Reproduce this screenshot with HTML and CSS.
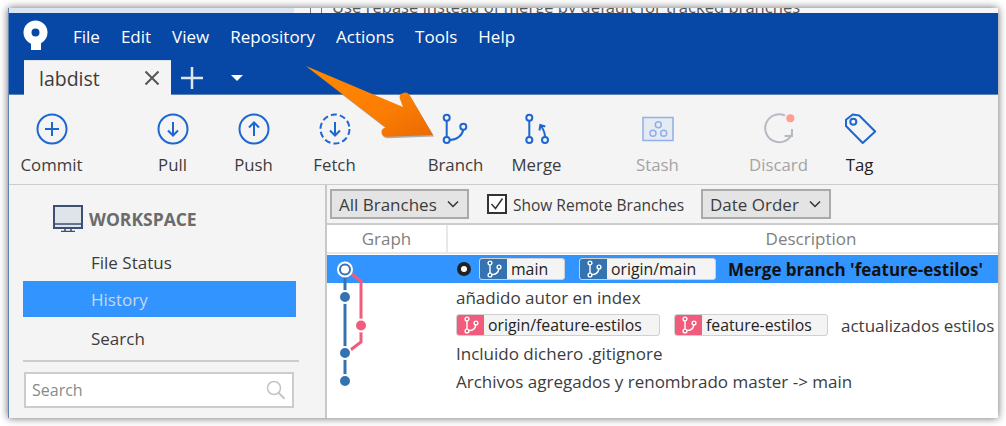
FILE: index.html
```html
<!DOCTYPE html>
<html lang="es">
<head>
    <meta charset="UTF-8">
    <meta name="viewport" content="width=device-width, initial-scale=1.0">
    <title>Sourcetree - labdist</title>
    <link rel="stylesheet" href="styles.css">
</head>
<body>
    <svg class="defs" width="0" height="0">
        <symbol id="chip-branch" viewBox="0 0 16 18">
            <g fill="none" stroke="#fff" stroke-width="1.4">
                <circle cx="4" cy="3" r="1.9"/>
                <circle cx="4" cy="15" r="1.9"/>
                <circle cx="13" cy="7" r="1.9"/>
                <path d="M4 5v8M5.800 14.600c4 0 6.600-2.400 7-5.700"/>
            </g>
        </symbol>
    </svg>

    <div class="window">
        <div class="behind">
            <span class="behind-box"></span>
            <span class="behind-text">Use rebase instead of merge by default for tracked branches</span>
        </div>

        <header class="topbar">
            <div class="menu-row">
                <svg class="logo" width="26" height="38" viewBox="0 0 26 38">
                    <circle cx="12.500" cy="12.500" r="8" fill="none" stroke="#fff" stroke-width="8"/>
                    <path d="M8 18h10v12H8z" fill="#fff"/>
                </svg>
                <nav class="menu">
                    <span>File</span>
                    <span>Edit</span>
                    <span>View</span>
                    <span>Repository</span>
                    <span>Actions</span>
                    <span>Tools</span>
                    <span>Help</span>
                </nav>
            </div>
            <div class="tab-row">
                <div class="tab">
                    <span>labdist</span>
                    <svg width="16" height="16" viewBox="0 0 16 16"><path d="M1.500 1.500l13 13M14.500 1.500l-13 13" stroke="#555" stroke-width="2" fill="none"/></svg>
                </div>
                <svg class="tab-plus" width="22" height="22" viewBox="0 0 22 22"><path d="M11 0v22M0 11h22" stroke="#dfe6f2" stroke-width="2.500"/></svg>
                <span class="tab-caret"></span>
            </div>
        </header>

        <div class="toolbar">
            <div class="tool">
                <svg width="34" height="34" viewBox="0 0 34 34"><circle cx="17" cy="17" r="14.500" class="ic"/><path d="M17 10v14M10 17h14" class="ic"/></svg>
                <span>Commit</span>
            </div>
            <div class="tool group-start">
                <svg width="34" height="34" viewBox="0 0 34 34"><circle cx="17" cy="17" r="14.500" class="ic"/><path d="M17 10v13M12 18.500l5 5 5-5" class="ic"/></svg>
                <span>Pull</span>
            </div>
            <div class="tool">
                <svg width="34" height="34" viewBox="0 0 34 34"><circle cx="17" cy="17" r="14.500" class="ic"/><path d="M17 24V11M12 15.500l5-5 5 5" class="ic"/></svg>
                <span>Push</span>
            </div>
            <div class="tool">
                <svg width="34" height="34" viewBox="0 0 34 34"><circle cx="17" cy="17" r="14.500" class="ic" stroke-dasharray="6 3.100"/><path d="M17 10v13M12 18.500l5 5 5-5" class="ic"/></svg>
                <span>Fetch</span>
            </div>
            <div class="tool group-start">
                <svg width="34" height="34" viewBox="0 0 34 34"><circle cx="7.700" cy="5.700" r="3" class="ic"/><circle cx="7.700" cy="28" r="3" class="ic"/><circle cx="24.300" cy="14.700" r="3" class="ic"/><path d="M7.700 8.700V25M10.700 28c7 0 12.500-4.500 13.600-10.300" class="ic"/></svg>
                <span>Branch</span>
            </div>
            <div class="tool">
                <svg width="34" height="34" viewBox="0 0 34 34"><circle cx="9.300" cy="5.700" r="3" class="ic"/><circle cx="9.300" cy="28" r="3" class="ic"/><circle cx="25" cy="28" r="3" class="ic"/><path d="M9.300 8.700V25M25 25c0-4-1.800-8-4.300-11.500M19.500 18.500l.8-5.500 5 1.500" class="ic"/></svg>
                <span>Merge</span>
            </div>
            <div class="tool group-start tool-off">
                <svg width="34" height="34" viewBox="0 0 34 34"><path d="M2 5.500h30v23H2z" fill="#e6ebf3" stroke="#8fb0e8" stroke-width="1.500"/><g fill="none" stroke="#8fb0e8" stroke-width="1.500"><circle cx="17.300" cy="12.800" r="3"/><circle cx="12" cy="21.200" r="3"/><circle cx="22.700" cy="21.200" r="3"/></g></svg>
                <span>Stash</span>
            </div>
            <div class="tool group-start tool-off">
                <svg width="34" height="34" viewBox="0 0 34 34"><path d="M23 3.500A14 14 0 1 0 29.500 23" fill="none" stroke="#b4b9c4" stroke-width="2"/><path d="M22.500 24h7.500v-7" fill="none" stroke="#b4b9c4" stroke-width="2"/><circle cx="28.300" cy="6.300" r="4" fill="#ff9e8e"/></svg>
                <span>Discard</span>
            </div>
            <div class="tool tool-dark">
                <svg width="34" height="34" viewBox="0 0 34 34"><path d="M3 7.700L9.700 2.500l6.500 1 16 16L19.700 31 3 14z" class="ic" stroke-linejoin="round"/><circle cx="10.300" cy="9.700" r="3" class="ic"/></svg>
                <span>Tag</span>
            </div>
        </div>

        <div class="content">
            <aside class="sidebar">
                <div class="workspace">
                    <svg width="30" height="27" viewBox="0 0 30 27"><path d="M1 1h28v22H1z" fill="#dfe3ea" stroke="#3d4f73" stroke-width="2"/><path d="M1 19h28" stroke="#3d4f73" stroke-width="1.500"/><path d="M12 23v3M18 23v3M8 26.500h14" stroke="#3d4f73" stroke-width="1.500"/></svg>
                    <span>WORKSPACE</span>
                </div>
                <ul class="nav">
                    <li>File Status</li>
                    <li class="nav-active">History</li>
                    <li>Search</li>
                </ul>
                <div class="side-search">
                    <span>Search</span>
                    <svg width="20" height="20" viewBox="0 0 20 20"><circle cx="8" cy="8" r="6.500" fill="none" stroke="#c4c4c4" stroke-width="1.500"/><path d="M12.500 12.800l6 6" stroke="#c4c4c4" stroke-width="2"/></svg>
                </div>
            </aside>

            <main class="main">
                <div class="filters">
                    <div class="dropdown dropdown-branches">
                        <span>All Branches</span>
                        <svg width="12" height="8" viewBox="0 0 12 8"><path d="M1 1.500l5 5 5-5" fill="none" stroke="#333" stroke-width="1.500"/></svg>
                    </div>
                    <label class="check">
                        <svg width="20" height="20" viewBox="0 0 20 20"><path d="M1 1h18v18H1z" fill="#fff" stroke="#333" stroke-width="2"/><path d="M4.500 10l4 4.500 7-10" fill="none" stroke="#333" stroke-width="1.500"/></svg>
                        <span>Show Remote Branches</span>
                    </label>
                    <div class="dropdown dropdown-order">
                        <span>Date Order</span>
                        <svg width="12" height="8" viewBox="0 0 12 8"><path d="M1 1.500l5 5 5-5" fill="none" stroke="#333" stroke-width="1.500"/></svg>
                    </div>
                </div>

                <div class="log-head">
                    <div class="head-graph">Graph</div>
                    <div class="head-desc">Description</div>
                </div>

                <div class="log">
                    <svg class="graph" width="60" height="140" viewBox="0 0 60 140">
                        <g fill="none">
                            <path d="M24.700 19l9.300 7v61l-10.500 8" stroke="#f15c7d" stroke-width="3"/>
                            <path d="M18 14v112" stroke="#3572b0" stroke-width="3"/>
                        </g>
                        <g fill="#3572b0" stroke="#fff" stroke-width="2">
                            <circle cx="18" cy="42" r="6"/>
                            <circle cx="18" cy="98" r="6"/>
                            <circle cx="18" cy="126" r="6"/>
                        </g>
                        <circle cx="34" cy="70.500" r="6" fill="#f15c7d" stroke="#fff" stroke-width="2"/>
                        <circle cx="18" cy="14.500" r="7" fill="#3572b0" stroke="#fff" stroke-width="2"/>
                        <circle cx="18" cy="14.500" r="4" fill="#fff"/>
                    </svg>
                    <div class="row row-selected">
                        <span class="head-dot"></span>
                        <span class="chip chip-main"><i class="chip-icon"><svg width="16" height="18"><use href="#chip-branch"/></svg></i><b>main</b></span>
                        <span class="chip chip-origin"><i class="chip-icon"><svg width="16" height="18"><use href="#chip-branch"/></svg></i><b>origin/main</b></span>
                        <strong class="subject">Merge branch 'feature-estilos'</strong>
                    </div>
                    <div class="row">añadido autor en index</div>
                    <div class="row">
                        <span class="chip chip-red chip-ofe"><i class="chip-icon"><svg width="16" height="18"><use href="#chip-branch"/></svg></i><b>origin/feature-estilos</b></span>
                        <span class="chip chip-red chip-fe"><i class="chip-icon"><svg width="16" height="18"><use href="#chip-branch"/></svg></i><b>feature-estilos</b></span>
                        <span class="row-after">actualizados estilos</span>
                    </div>
                    <div class="row">Incluido dichero .gitignore</div>
                    <div class="row">Archivos agregados y renombrado master -&gt; main</div>
                </div>
            </main>
        </div>

        <!-- flecha puesta encima de la captura -->
        <svg class="arrow" width="150" height="90" viewBox="0 0 150 90">
            <defs>
                <linearGradient id="arrow-fill" x1="0" y1="0" x2="1" y2="1">
                    <stop offset="0" stop-color="#ff8a00"/>
                    <stop offset=".65" stop-color="#fb7c02"/>
                    <stop offset="1" stop-color="#e86a05"/>
                </linearGradient>
            </defs>
            <path d="M4 1L101 42L98 34Q96.500 29.500 100 28.500L103 27.500Q106 27 107.500 30L131 70L85 71.800Q79.500 71.800 79.500 67Q79.500 63 84 62.800Z" fill="#666" opacity=".5" transform="translate(1 1.500)"/>
            <path d="M4 1L101 42L98 34Q96.500 29.500 100 28.500L103 27.500Q106 27 107.500 30L131 70L85 71.800Q79.500 71.800 79.500 67Q79.500 63 84 62.800Z" fill="url(#arrow-fill)"/>
        </svg>
    </div>
</body>
</html>
```

FILE: styles.css
```css
* {
    box-sizing: border-box;
}
html, body {
    margin: 0;
    padding: 0;
    height: 100%;
    overflow: hidden;
}
body {
    position: relative;
    background-color: #fff;
    font-family: "Open Sans", "Noto Sans", sans-serif;
    font-size: 17px;
    color: #3c3c3c;
}
.defs {
    position: absolute;
}

.window {
    position: relative;
    margin: 8px 0 0 8px;
    width: 990px;
    height: 410px;
    padding-top: 5px;
    background: #dbe5f1;
    border-left: 1px solid #5f83b6;
    box-shadow: 0 0 8px rgba(0, 0, 0, .6);
}

/* lo que asoma detras de la ventana */
.behind {
    position: absolute;
    top: 0;
    left: 285px;
    right: 0;
    height: 5px;
    display: flex;
    align-items: flex-start;
    gap: 10px;
    padding-left: 16px;
    overflow: hidden;
    background: #f4f6f9;
    font-size: 16.600px;
    line-height: 20px;
    color: #555;
}
.behind-text {
    margin-top: -11px;
}
.behind-box {
    display: block;
    width: 12px;
    height: 16px;
    margin-top: -8px;
    border: 1px solid #777;
    flex-shrink: 0;
}

.topbar {
    background: #0747a6;
    height: 82px;
    border-bottom: 1px solid #5f83b6;
}
.menu-row {
    display: flex;
    align-items: center;
    height: 47px;
    padding-left: 14px;
}
.logo {
    margin-top: 4px;
}
.menu {
    display: flex;
    gap: 21px;
    margin-left: 24px;
    color: #fff;
    font-size: 17px;
}
.tab-row {
    display: flex;
    align-items: center;
    height: 35px;
    padding-left: 15px;
}
.tab {
    display: flex;
    align-items: center;
    justify-content: space-between;
    width: 147px;
    height: 35px;
    padding: 0 11px 0 15px;
    background: #f4f4f4;
    border-top: 1px solid #dde3ea;
    font-size: 19.500px;
}
.tab-plus {
    margin-left: 10px;
}
.tab-caret {
    margin-left: 28px;
    border-top: 6px solid #fff;
    border-left: 6px solid transparent;
    border-right: 6px solid transparent;
}

.toolbar {
    display: flex;
    height: 90px;
    padding-left: 2px;
    background: #f4f4f4;
    border-bottom: 1px solid #ccc;
    font-size: 16.800px;
}
.tool {
    display: flex;
    flex-direction: column;
    align-items: center;
    width: 81px;
    padding-top: 17px;
    flex-shrink: 0;
}
.tool span {
    margin-top: 7px;
    line-height: 24px;
}
.group-start {
    margin-left: 40px;
}
.tool-off {
    color: #a4a4a4;
}
.tool-dark {
    color: #222;
}
.ic {
    fill: none;
    stroke: #1e66d0;
    stroke-width: 2;
}

.content {
    display: flex;
    height: 233px;
}
.sidebar {
    width: 318px;
    flex-shrink: 0;
    padding: 0 26px 0 14px;
    background: #f4f4f4;
    border-right: 2px solid #c8c8c8;
}
.workspace {
    display: flex;
    align-items: center;
    gap: 6px;
    height: 59px;
    padding: 8px 0 0 30px;
    font-size: 17.500px;
    font-weight: 700;
    color: #6b6b6b;
}
.nav {
    list-style: none;
    margin: 0;
    padding: 0 0 2px;
    border-bottom: 2px solid #ccc;
}
.nav li {
    height: 38px;
    line-height: 38px;
    padding-left: 68px;
}
.nav .nav-active {
    height: 36px;
    line-height: 38px;
    margin: -1px 3px 3px 0;
    background: #3295ff;
    color: #c5d8ea;
}
.side-search {
    display: flex;
    align-items: center;
    justify-content: space-between;
    height: 36px;
    margin: 10px 5px 0 1px;
    padding: 0 6px;
    background: #fff;
    border: 2px solid #ccc;
    font-size: 16px;
    color: #8a8a8a;
}

.main {
    flex: 1;
    min-width: 0;
    background: #fff;
    overflow: hidden;
}
.filters {
    display: flex;
    align-items: center;
    height: 40px;
    padding-left: 3px;
    background: #f4f4f4;
    border-bottom: 2px solid #ccc;
}
.dropdown {
    display: flex;
    align-items: center;
    justify-content: space-between;
    height: 30px;
    padding: 0 8px 0 7px;
    background: #e4e4e4;
    border: 2px solid #aaa;
}
.dropdown span {
    padding-top: 1px;
}
.dropdown-branches {
    width: 139px;
}
.dropdown-order {
    width: 130px;
}
.check {
    display: flex;
    align-items: center;
    gap: 6px;
    width: 214px;
    margin-left: 18px;
    font-size: 15.500px;
}
.check span {
    padding-top: 2px;
}
.log-head {
    display: flex;
    height: 29px;
    border-bottom: 2px solid #e8e8e8;
    color: #808080;
    line-height: 27px;
    text-align: center;
}
.head-graph {
    width: 121px;
    flex-shrink: 0;
    border-right: 2px solid #e8e8e8;
}
.head-desc {
    width: 726px;
    flex-shrink: 0;
}
.log {
    position: relative;
    margin-top: 1px;
}
.graph {
    position: absolute;
    top: 0;
    left: 0;
    z-index: 1;
}
.row {
    display: flex;
    align-items: center;
    height: 28px;
    padding-left: 129px;
    white-space: nowrap;
    color: #3c3c3c;
}
.row-selected {
    background: #3295ff;
    color: #111;
}
.head-dot {
    width: 14px;
    height: 14px;
    margin-left: 1px;
    margin-right: 8px;
    border-radius: 50%;
    background: #fff;
    border: 4px solid #222;
}
.chip {
    display: flex;
    align-items: center;
    height: 22px;
    background: #f4f4f4;
    border: 1px solid #d0d0d0;
    border-radius: 3px;
    overflow: hidden;
    font-size: 15.800px;
}
.chip b {
    font-weight: 400;
    color: #222;
    padding-left: 4px;
}
.chip-icon {
    display: flex;
    align-items: center;
    justify-content: center;
    width: 27px;
    height: 22px;
    background: #3572b0;
}
.chip-red .chip-icon {
    background: #f15c7d;
}
.chip-main {
    width: 86px;
}
.chip-origin {
    width: 137px;
    margin-left: 14px;
}
.chip-ofe {
    width: 204px;
}
.chip-fe {
    width: 154px;
    margin-left: 14px;
}
.subject {
    margin-left: 12px;
    font-weight: 700;
}
.row-after {
    margin-left: 13px;
}

.arrow {
    position: absolute;
    top: 57px;
    left: 293px;
    z-index: 3;
}
```
